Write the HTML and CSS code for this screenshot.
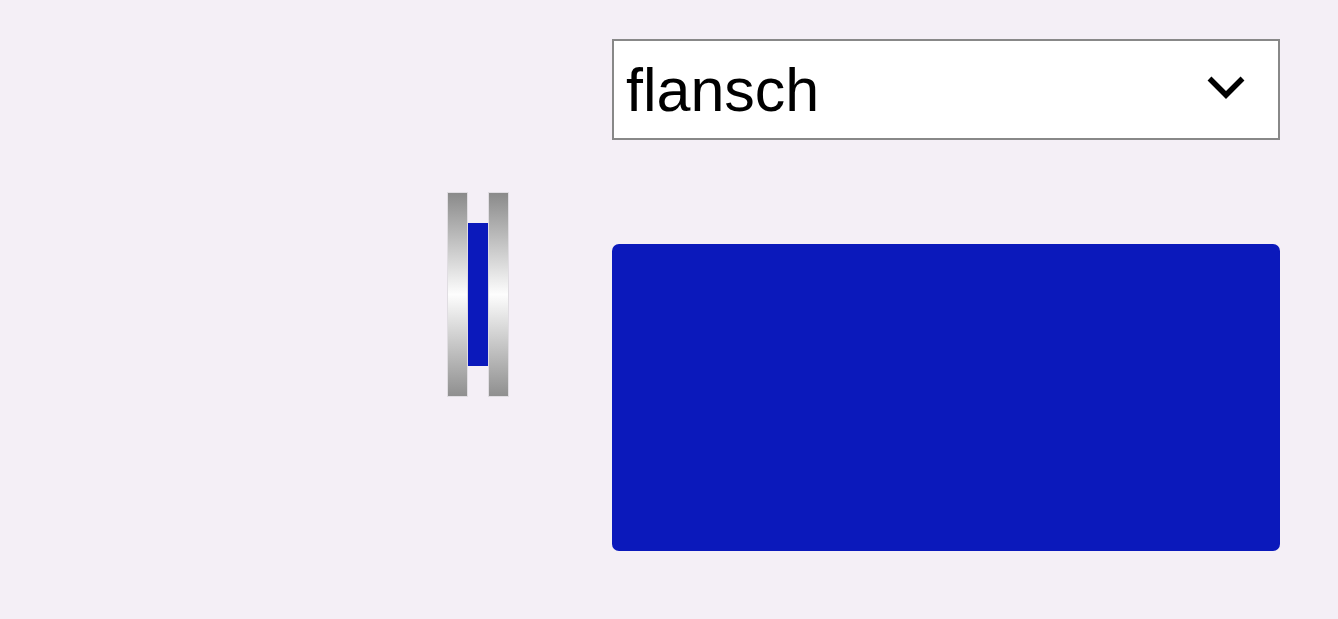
FILE: index.html
```html
<!DOCTYPE html>
<html lang="de">
<head>
  <meta charset="UTF-8" />
  <meta name="viewport" content="width=device-width, initial-scale=1" />
  <title>Flansch</title>
  <link rel="stylesheet" href="styles.css">
</head>
<body>

<div class="app">
  <section class="preview">
    <div class="flange">
      <div class="plate"></div>
      <div class="core"></div>
      <div class="plate"></div>
    </div>
  </section>

  <section class="panel">
    <div class="picker">
      <select id="part">
        <option>flansch</option>
        <option>rohr</option>
        <option>bogen</option>
      </select>
      <svg class="chevron" viewBox="0 0 40 26" width="40" height="26">
        <path d="M3.5 3.5 L20 20 L36.5 3.5" fill="none" stroke="#000" stroke-width="5.5" />
      </svg>
    </div>
    <div class="swatch"></div>
  </section>
</div>

</body>
</html>
```

FILE: styles.css
```css
body {
  margin: 0;
  background: #f4eff6;
  font-family: 'Liberation Sans', Arial, sans-serif;
}
.app {
  display: flex;
  padding-top: 39px;
}
.preview {
  width: 612px;
  display: flex;
  justify-content: flex-end;
  align-items: flex-start;
  padding-right: 103px;
  padding-top: 153px;
  box-sizing: border-box;
}
.flange {
  display: flex;
  align-items: center;
}
.plate {
  width: 21px;
  height: 205px;
  box-sizing: border-box;
  border: 1px solid #e0dde2;
  background: linear-gradient(#8a8a8a, #fdfdfd 50%, #8f8f8f);
}
.core {
  width: 20px;
  height: 143px;
  background: #0b19bb;
}
.panel {
  width: 668px;
  display: flex;
  flex-direction: column;
  gap: 104px;
}
.picker {
  position: relative;
}
.picker select {
  appearance: none;
  width: 100%;
  height: 101px;
  border: 2px solid #888;
  border-radius: 0;
  background: #fff;
  font-family: 'Liberation Sans', Arial, sans-serif;
  font-size: 61px;
  color: #000;
  padding: 0 0 0 12px;
  outline: none;
}
.picker .chevron {
  position: absolute;
  right: 34px;
  top: 36px;
  pointer-events: none;
}
.swatch {
  height: 307px;
  background: #0b19bb;
  border-radius: 7px;
}
```
